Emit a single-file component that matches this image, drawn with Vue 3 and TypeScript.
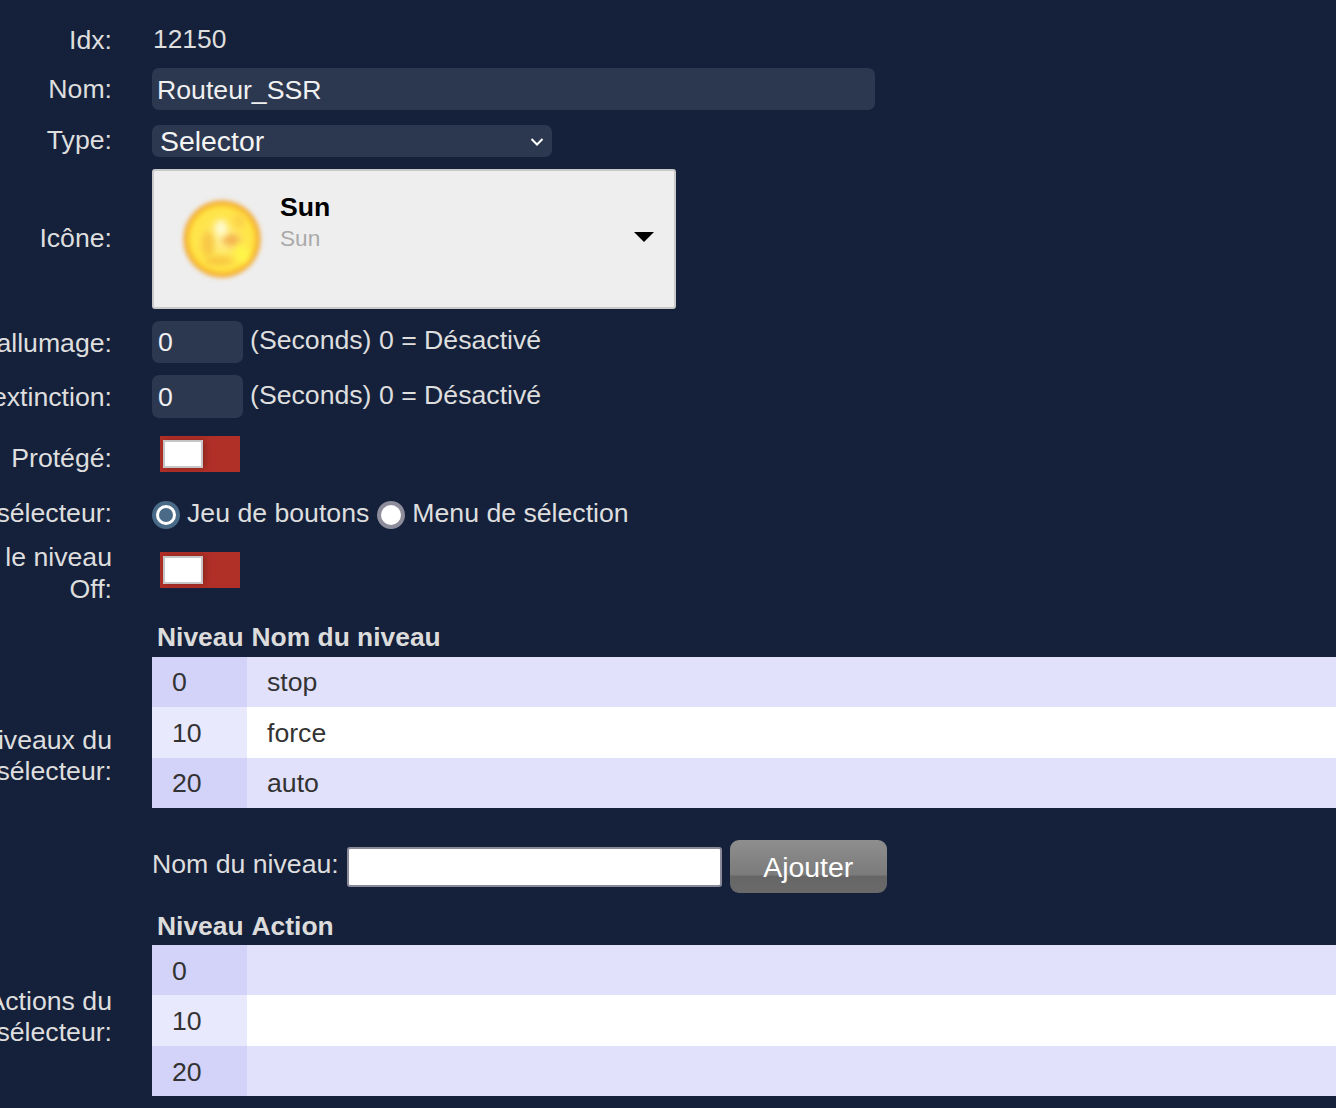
<script setup lang="ts">
const levels: { level: number; name: string }[] = [
  { level: 0, name: 'stop' },
  { level: 10, name: 'force' },
  { level: 20, name: 'auto' },
]
</script>

<template>
  <div class="page">
    <form class="form" @submit.prevent>
      <div class="row idx">
        <label class="lab">Idx:</label>
        <div class="val plain">12150</div>
      </div>
      <div class="row nom">
        <label class="lab">Nom:</label>
        <input class="field name" value="Routeur_SSR" />
      </div>
      <div class="row type">
        <label class="lab">Type:</label>
        <div class="select">
          <span>Selector</span>
          <svg width="14" height="10" viewBox="0 0 14 10"><path d="M1.5 2 7 7.5 12.5 2" fill="none" stroke="#fff" stroke-width="2" /></svg>
        </div>
      </div>
      <div class="row icon">
        <label class="lab">Icône:</label>
        <div class="picker">
          <svg class="sun" width="90" height="90" viewBox="0 0 90 90">
            <defs>
              <radialGradient id="sunBody">
                <stop offset="0" stop-color="#fff09a" />
                <stop offset="0.5" stop-color="#ffe552" />
                <stop offset="0.78" stop-color="#ffe545" />
                <stop offset="0.9" stop-color="#f9bb2c" />
                <stop offset="1" stop-color="#ec9a35" stop-opacity="0.8" />
              </radialGradient>
              <filter id="soft" x="-30%" y="-30%" width="160%" height="160%"><feGaussianBlur stdDeviation="2.2" /></filter>
              <filter id="softer" x="-60%" y="-60%" width="220%" height="220%"><feGaussianBlur stdDeviation="3.2" /></filter>
            </defs>
            <circle cx="45" cy="45" r="39" fill="url(#sunBody)" filter="url(#soft)" />
            <ellipse cx="31" cy="50" rx="6" ry="13" fill="#f7c040" opacity="0.85" filter="url(#softer)" />
            <ellipse cx="54" cy="46" rx="9" ry="6" fill="#f3ae4c" opacity="0.9" filter="url(#softer)" />
            <ellipse cx="42" cy="67" rx="14" ry="4" fill="#f6bd3c" opacity="0.85" filter="url(#softer)" />
            <ellipse cx="44" cy="34" rx="6" ry="8" fill="#fffbd2" filter="url(#softer)" />
            <ellipse cx="62" cy="27" rx="6" ry="8" fill="#fbcb4c" opacity="0.7" filter="url(#softer)" />
            <ellipse cx="65" cy="60" rx="7" ry="9" fill="#fff648" filter="url(#softer)" />
          </svg>
          <div class="pick-text">
            <div class="pick-title">Sun</div>
            <div class="pick-sub">Sun</div>
          </div>
          <span class="caret"></span>
        </div>
      </div>
      <div class="row timer first">
        <label class="lab">Délai d'allumage:</label>
        <input class="field num" value="0" />
        <span class="hint">(Seconds) 0 = Désactivé</span>
      </div>
      <div class="row timer second">
        <label class="lab">Délai d'extinction:</label>
        <input class="field num" value="0" />
        <span class="hint">(Seconds) 0 = Désactivé</span>
      </div>
      <div class="row prot">
        <label class="lab">Protégé:</label>
        <div class="switch"><span class="knob"></span></div>
      </div>
      <div class="row style">
        <label class="lab">Style du sélecteur:</label>
        <div class="radios">
          <span class="radio on"></span><span>Jeu de boutons</span>
          <span class="radio off"></span><span>Menu de sélection</span>
        </div>
      </div>
      <div class="row hide">
        <label class="lab">Masquer le niveau Off:</label>
        <div class="switch"><span class="knob"></span></div>
      </div>
      <div class="row levels">
        <label class="lab">Niveaux du sélecteur:</label>
        <div class="block">
          <div class="thead"><span class="th1">Niveau</span><span>Nom du niveau</span></div>
          <div class="tbody">
            <div v-for="(l, i) in levels" :key="l.level" class="tr" :class="i % 2 ? 'even' : 'odd'">
              <div class="td1">{{ l.level }}</div>
              <div class="td2">{{ l.name }}</div>
            </div>
          </div>
          <div class="add">
            <span>Nom du niveau:</span>
            <input class="plain-input" />
            <button class="btn" type="button">Ajouter</button>
          </div>
        </div>
      </div>
      <div class="row actions">
        <label class="lab">Actions du sélecteur:</label>
        <div class="block">
          <div class="thead"><span class="th1">Niveau</span><span>Action</span></div>
          <div class="tbody">
            <div v-for="(l, i) in levels" :key="l.level" class="tr" :class="i % 2 ? 'even' : 'odd'">
              <div class="td1">{{ l.level }}</div>
              <div class="td2"></div>
            </div>
          </div>
        </div>
      </div>
    </form>
  </div>
</template>

<style>
html, body { margin: 0; background: #15213b; }
</style>

<style scoped>
.page {
  height: 100vh;
  overflow: hidden;
  background: #15213b;
  color: #dedede;
  font-family: "Liberation Sans", Arial, sans-serif;
  font-size: 26.67px;
  line-height: 31px;
}
.form { margin-left: -128px; padding-top: 24px; width: 1560px; }
.row { display: flex; align-items: center; }
.lab { width: 240px; margin-right: 40px; text-align: right; flex: none; }
.plain { height: 32px; padding-left: 1px; font-size: 26.4px; }
.nom { margin-top: 12px; }
.type { margin-top: 15px; height: 32px; }
.type .lab { margin-bottom: 2px; }
.icon { margin-top: 12px; }
.icon .lab { margin-bottom: 2px; }
.timer.first { margin-top: 12px; }
.timer.second { margin-top: 12px; }
.timer .lab { padding-top: 2px; }
.prot { margin-top: 18px; height: 37px; align-items: flex-start; }
.prot .lab { padding-top: 7px; }
.style { margin-top: 24px; height: 33px; }
.hide { margin-top: 11px; height: 63px; align-items: flex-start; }
.hide .lab { line-height: 32px; }
.hide .switch { margin-top: 11px; }
.levels { margin-top: 17px; }
.levels .lab { margin-bottom: 2px; }
.levels .even .td2, .levels .even .td1 { line-height: 52px; }
.actions { margin-top: 16px; }
.actions .block { padding-bottom: 29px; }
.actions .td1 { line-height: 52px; }
.actions .thead { padding-bottom: 1px; }

.field {
  box-sizing: border-box;
  border: 0;
  outline: 0;
  border-radius: 7px;
  background: #2c3850;
  color: #f0f0f0;
  font: inherit;
  padding: 2px 6px 0 6px;
  margin: 0;
}
.name { width: 723px; height: 42px; padding-left: 5px; }
.num { width: 91px; height: 42px; padding-top: 1px; }
.timer.second .num { height: 43px; }
.hint { margin-left: 7px; position: relative; top: -2px; }
.timer.second .hint { top: -1px; }
.select {
  box-sizing: border-box;
  width: 400px;
  height: 32px;
  border-radius: 7px;
  background: #2c3850;
  color: #f4f4f4;
  font-size: 28.4px;
  padding: 1px 8px 0 8px;
  display: flex;
  align-items: center;
  justify-content: space-between;
}
.picker {
  box-sizing: border-box;
  width: 524px;
  height: 140px;
  background: #eeeeee;
  border: 2px solid #c9c9c9;
  border-radius: 3px;
  color: #000;
  display: flex;
  padding-left: 23px;
  position: relative;
}
.sun { flex: none; margin-top: 23px; }
.pick-text { margin-left: 13px; padding-top: 20px; }
.pick-title { font-weight: 700; font-size: 26.6px; line-height: 33px; }
.pick-sub { color: #aaaaaa; font-size: 22.6px; line-height: 28px; margin-top: 1px; }
.caret {
  position: absolute;
  right: 20px;
  top: 61px;
  width: 0;
  height: 0;
  border-left: 10px solid transparent;
  border-right: 10px solid transparent;
  border-top: 10px solid #000;
}
.switch {
  width: 80px;
  height: 36px;
  margin-left: 8px;
  background: #b03028;
  position: relative;
  flex: none;
}
.knob {
  position: absolute;
  left: 3px;
  top: 4px;
  box-sizing: border-box;
  width: 40px;
  height: 28px;
  background: #fff;
  border: 2px solid #c6c6c6;
  box-shadow: 2px 0 6px rgba(90, 20, 15, 0.45);
}
.radios { display: flex; align-items: center; }
.radio {
  box-sizing: border-box;
  width: 28px;
  height: 28px;
  border-radius: 50%;
  flex: none;
  margin-top: 3px;
}
.radio.on {
  background: #fff;
  border: 4px solid #4a6b88;
  position: relative;
  margin-right: 7px;
}
.radio.on::after {
  content: "";
  position: absolute;
  inset: 3px;
  background: #4a6b88;
  border-radius: 50%;
}
.radio.off {
  background: #fff;
  border: 4px solid #8d8d9b;
  margin: 3px 7px 0 8px;
}
.block { flex: 1; min-width: 0; }
.thead {
  font-weight: 700;
  font-size: 26.4px;
  box-sizing: border-box;
  height: 36px;
  padding: 0 0 4px 5px;
  display: flex;
  align-items: center;
  color: #dcdcdc;
}
.th1 { margin-right: 8px; }
.tr { display: flex; height: 50.33px; color: #333; }
.td1 { width: 95px; padding-left: 20px; box-sizing: border-box; line-height: 50px; }
.td2 { flex: 1; padding-left: 20px; line-height: 50px; }
.odd .td1 { background: #d3d3fa; }
.odd .td2 { background: #e1e1fb; }
.even .td1 { background: #e9e9fe; }
.even .td2 { background: #ffffff; }
.add {
  display: flex;
  align-items: center;
  margin-top: 32px;
  height: 53px;
}
.plain-input {
  box-sizing: border-box;
  width: 375px;
  height: 40px;
  margin: 1px 8px 0 8px;
  background: #fff;
  border: 2px solid #8a8a98;
  border-radius: 3px;
  outline: 0;
}
.add > span { position: relative; top: -2px; }
.btn {
  box-sizing: border-box;
  width: 157px;
  height: 53px;
  border: 0;
  border-radius: 9px;
  color: #fff;
  font: inherit;
  font-size: 28.4px;
  padding: 2px 0 0;
  background: linear-gradient(to bottom, #8e8e8e 0%, #7b7b7b 66%, #666 68%, #6a6a6a 100%);
}
</style>
